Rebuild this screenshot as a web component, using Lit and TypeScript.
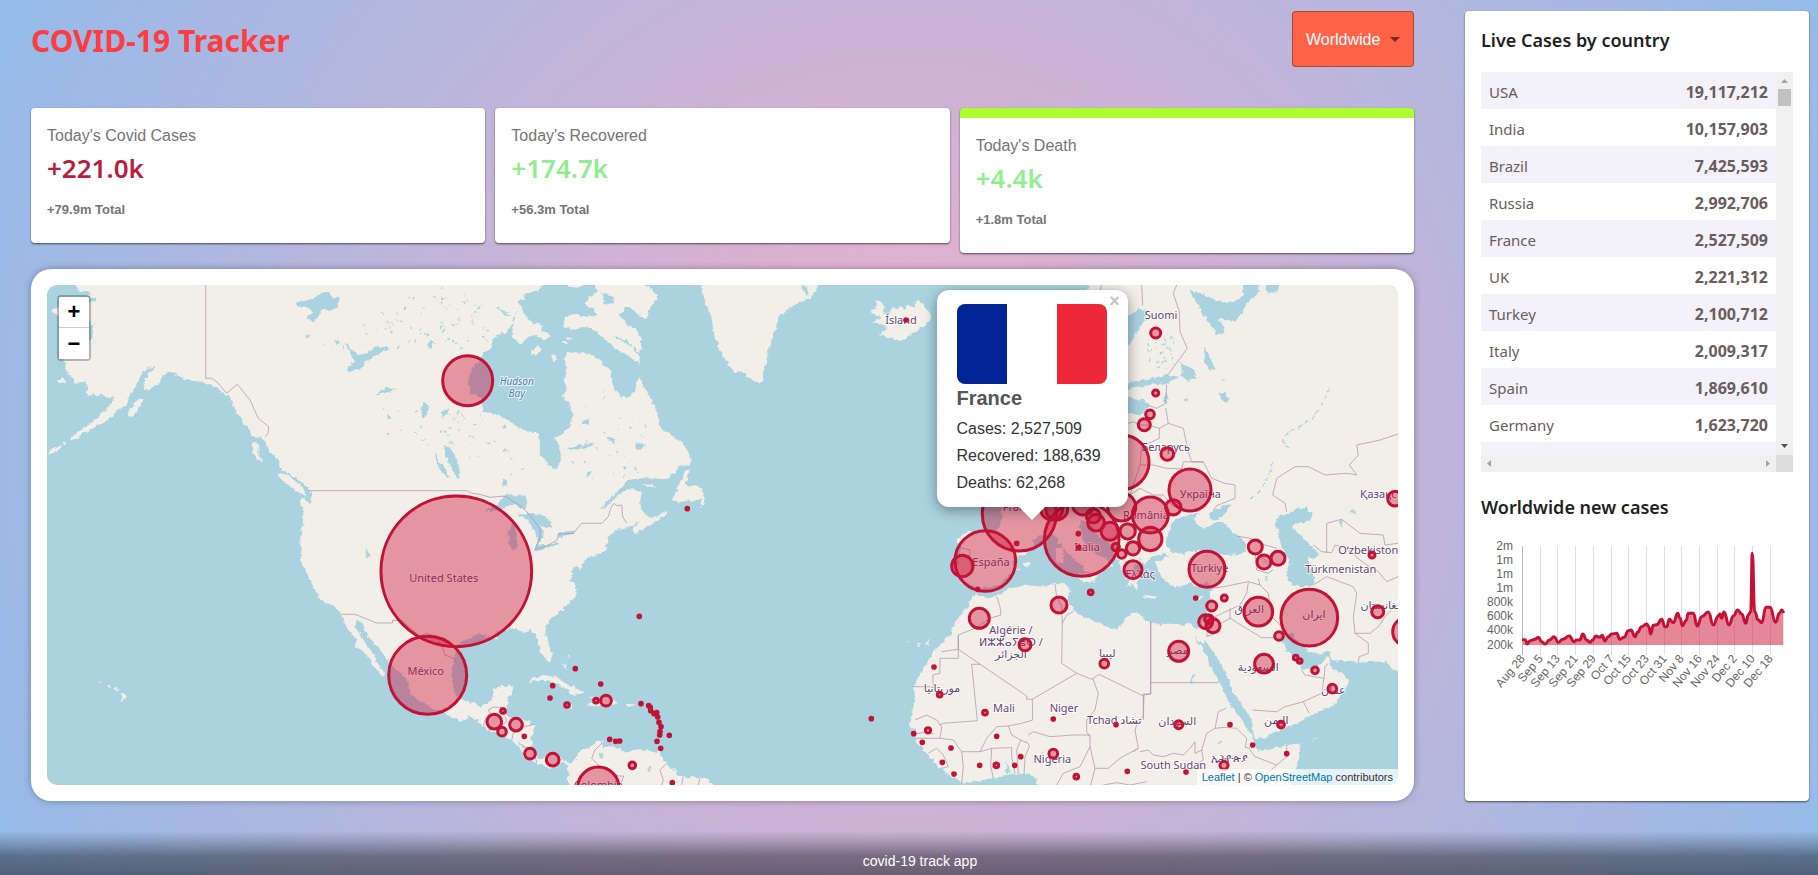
import { LitElement, html, svg, css } from "lit";
import { customElement, property, state } from "lit/decorators.js";
import { classMap } from "lit/directives/class-map.js";

/* ---------- Map geometry ----------
   Shapes are digitised on sheets: each sheet has an origin on the map canvas
   and its points are counted in thirds of a canvas unit. */
const SHEETS: Record<string, [number, number]> = {
  A: [30, 265],
  B: [440, 265],
  C: [900, 265],
  D: [30, 530],
  E: [440, 530],
  F: [900, 490],
  G: [1140, 490],
};

const at = (sheet: string, x: number, y: number): [number, number] => {
  const [ox, oy] = SHEETS[sheet];
  return [Math.round((ox + x / 3) * 10) / 10, Math.round((oy + y / 3) * 10) / 10];
};

const trace = (source: string, close: boolean): string => {
  let sheet = "A";
  const points: string[] = [];
  for (const token of source.trim().split(/\s+/)) {
    if (SHEETS[token]) {
      sheet = token;
      continue;
    }
    const [x, y] = token.split(",").map(Number);
    points.push(at(sheet, x, y).join(" "));
  }
  return `M${points.join("L")}${close ? "Z" : ""}`;
};

const LAND: string[] = [
  // The Americas
  `A 138,20 138,60 140,75 165,80 185,85 175,95 205,103 190,108 178,115 165,150 180,170 187,180 188,218 176,226 160,240
   150,260 100,285 108,300 115,330 130,340 135,356 158,354 165,340 168,360 172,375 170,395 190,385 200,395 215,388
   235,398 252,392 248,410 225,438 195,465 170,485 145,500 120,522 135,525 160,505 185,492 210,480 235,465 262,435
   290,420 300,390 320,360 335,325 355,308 378,305 355,325 345,345 342,375 360,372 390,350 400,328 420,318 440,330
   470,345 510,350 540,360 560,368 580,385 600,400 610,420 618,440 632,455 640,475 655,490 665,510 680,520 695,512
   700,525 712,545 720,560 735,575 745,590 752,612 775,625 800,640 820,655 835,668 845,690 843,715 830,705 812,698
   815,720 820,745 818,780 812,810 810,840
   D 808,30 815,55 812,90 825,120 840,150 850,175 868,200 880,215 900,222 925,238 935,255 945,285 955,300 968,315
   980,330 975,345 1000,365 1020,385 1025,405 1045,420 1058,440 1065,430 1050,410 1040,395 1025,365 1005,340 995,320
   985,305 975,290 975,272 990,273 1003,290 1010,315 1030,335 1045,355 1060,370 1070,390 1090,410 1110,430 1130,450
   1138,480 1150,500 1180,518 1205,535 1240,545 1270,565 1290,572 1320,560 1350,580
   E 130,590 150,603 175,612 200,622 220,635 235,650 245,665 255,680 275,690 290,700 315,708 330,718 345,710 370,695
   380,705 385,720 383,740 385,765 385,790 830,790 815,760 800,748 775,742 740,742 715,735 700,718 680,700 668,688
   660,670 630,664 600,658 575,662 550,665 535,655 515,648 490,655 485,640 490,630 470,636 450,652 425,660 412,680
   400,695 385,698 370,690 345,675 320,675 300,690 285,675 275,650 275,620 285,585 260,572 230,568 205,560 195,545
   205,520 200,505 215,490 222,470 205,465 180,470 162,478 155,510 145,520 120,530 100,518 80,515 50,500 40,475
   35,440 40,400 45,375 50,350 65,335 90,322 110,312 130,315 150,322 175,325 165,308 185,303 215,296 235,300 255,308
   270,300 288,315 295,340 300,360 315,385 328,397 335,385 335,365 325,340 315,315 318,290 335,265 360,245 380,225
   400,210 410,190 405,165 390,150 400,135 392,120 410,110 425,118 430,100 440,85 480,70 500,60 495,45 505,35 503,20
   525,5
   B 550,790 575,780 600,765 585,785 575,800 585,810 605,795 640,775 675,750 680,735 655,755 625,755 605,735 600,710
   605,690 605,680 570,672 545,680 520,705 495,730 480,735 500,710 525,685 550,665 555,650 580,642 620,640 680,643
   700,625 720,605 750,600 752,580 740,550 720,525 690,510 665,490 655,465 650,430 635,410 625,385 610,360 600,335
   590,350 585,380 560,400 545,395 525,375 515,345 515,320 490,300 480,285 450,268 410,262 380,262 370,280 380,310
   375,345 380,375 365,395 385,415 398,445 392,480 370,505 345,520 360,545 362,580 355,600 345,615 330,600 300,570
   298,505 265,500 240,490 200,465 170,448 130,440 125,400 110,390 90,388 85,350 95,310 120,285 130,265 155,245
   155,225 180,205 195,205 215,180 220,155 240,125 235,110 255,100 250,90 280,80 300,70 315,55 315,20`,
  // Baffin Island
  `B 385,20 385,58 395,70 415,70 440,55 465,60 470,80 445,100 435,120 460,130 470,150 440,155 400,148 375,155 370,185
   400,195 430,185 455,190 490,220 520,245 550,265 575,280 600,300 595,270 575,245 520,215 560,225 600,265 605,235
   590,190 560,180 540,150 560,125 590,140 615,165 625,140 655,95 640,80 600,50 600,20`,
  `B 240,125 225,150 218,185 215,220 245,237 265,215 290,210 315,225 332,212 305,195 310,180 280,175 255,150 245,130`,
  `B 275,255 295,243 305,255 285,272 273,268`,
  `B 340,265 350,275 343,293 335,280`,
  `B 363,228 378,228 380,237 368,236`,
  `B 380,218 393,218 396,226 386,226`,
  // Newfoundland, Anticosti
  `B 750,612 735,620 720,650 710,680 695,705 720,712 750,705 765,710 785,700 780,730 798,708 803,735 792,695 780,665
   765,660 745,665 735,655 745,630`,
  `B 605,655 630,656 650,670 630,668`,
  // Greenland, Iceland
  `B 785,20 785,58 790,90 800,120 815,160 820,200 835,240 850,275 870,305 885,325 905,318 930,340 955,355 968,350
   970,320 980,285 985,250 1000,215 1010,180 1020,150 1050,130 1075,115 1110,100 1130,75 1135,55 1135,20`,
  `B 1310,105 1325,110 1338,130 1325,140 1345,150 1360,122 1370,135 1380,122 1395,135 1405,118 1420,125 1430,105
   1450,115 1455,130 1470,140 1472,160 1455,180 1430,200 1400,215 1380,227 1350,218 1320,210 1325,200 1345,190
   1320,175 1295,172 1325,160 1290,140 1310,130`,
  // Caribbean
  `E 262,460 275,445 310,435 345,440 370,455 400,470 435,490 395,495 385,480 350,462 320,450 290,450`,
  `E 450,500 465,500 515,505 535,520 510,525 460,527 435,522 465,518`,
  `E 558,522 582,523 580,530 558,530`,
  `E 375,522 400,528 398,534 375,530`,
  `E 368,400 376,405 380,425 372,415`,
  `E 382,372 388,374 388,386 384,380`,
  `E 650,660 662,660 660,668 650,668`,
  // Pacific coast islands
  `A 300,435 315,410 330,400 340,405 325,435 305,455 293,445`,
  `A 51,568 70,550 97,540 85,555 60,568`,
  `A 98,535 112,532 104,540`,
  `A 663,535 687,535 685,565 697,595 680,580 668,560`,
  `A 743,627 775,632 805,655 825,680 830,693 805,685 775,660 750,640`,
  `A 65,135 80,125 92,130 95,150 75,148`,
  `A 78,345 95,338 108,348 90,356`,
  // Hawaii
  `D 273,490 282,490 292,502 285,510 274,514`,
  `D 206,454 215,454 215,460 206,460`,
  `D 234,465 241,465 241,471 234,471`,
  `D 250,472 258,475 272,482 262,483`,
  // Eurasia and Africa
  `C 560,20 568,60 500,200 300,600
   F 300,40 305,80 300,110 285,128 250,125 200,125 190,132 170,145 170,155 185,165 180,190 175,220 165,250 190,270
   185,280 215,285 225,295 240,300 255,290 300,285 320,260 345,235 335,215 355,200 385,185 400,170 395,150 420,135
   440,140 460,135 475,145 490,175 510,195 530,215 555,240 575,250 570,270 582,280 592,255 600,240 615,240 640,228
   620,205 590,195 570,180 555,160 545,135 535,105 545,90 565,95 580,115 600,140 625,155 640,175 645,195 655,215
   665,235 680,250 690,270 680,290 700,285 715,300 712,280 720,265 705,245 700,230 715,225 735,220 745,210 765,200
   G 70,190 85,198 65,208 45,215 55,240 65,262 90,285 120,290 150,280 170,290 205,275 215,290 210,330 200,360
   195,385 175,410 165,420 150,398 120,407 90,400 60,405 30,395 10,387
   F 735,387 715,370 695,368 680,378 670,400 650,418 620,410 590,395 560,385 525,365 520,350 500,335 505,320 515,305
   500,290 490,278 460,280 430,290 380,285 330,295 290,318 260,322 240,320 228,310 215,320 205,350 180,375 165,400
   155,430 135,450 105,480 90,505 75,530 55,560 40,590 45,620 40,650 35,680 30,705 45,720 50,760 80,790 110,825
   150,855 190,880 250,870 300,860 340,850 400,855 415,885 415,910
   G 450,910 455,870 470,830 480,790 478,760 440,765 380,780 355,782 345,765 340,745 320,715 300,685 275,650 250,600
   225,555 205,515 185,470 165,440 158,428 175,450 190,465 198,448 205,465 235,510 260,555 280,610 310,650 335,690
   335,720 345,745 370,745 410,725 450,710 490,690 530,670 560,655 590,640 605,610 627,573 610,550 580,540 568,520
   565,497 545,520 515,535 488,540 480,520 470,495 465,505 440,480 425,455 432,440 455,425 465,445 490,470 520,490
   550,492 567,483 575,510 600,512 655,518 700,515 735,515 750,530 800,560 800,-300
   C 1560,20`,
  // Mediterranean islands
  `F 478,125 488,130 486,165 472,160`,
  `F 468,175 490,172 490,215 468,218`,
  `F 520,250 565,252 575,280 545,272`,
  `F 365,226 380,216 394,222 385,232`,
  `F 350,238 358,236 356,242`,
  `F 728,316 745,316 772,320 765,326 735,322`,
  `G 160,326 172,320 192,317 178,330`,
  `G 516,745 530,745 528,750 516,750`,
  // Canary and Cape Verde islands
  `F 18,452 26,456 20,460`,
  `F 50,462 58,458 60,468 52,468`,
  `F 78,458 90,446 90,452 82,466`,
];

const WATER: string[] = [
  // Great Bear, Great Slave, Athabasca, Reindeer, Winnipeg
  `A 800,115 850,100 880,80 895,85 905,98 927,95 920,130 900,135 880,132 870,150 850,172 828,155 852,140 830,125 805,124`,
  `A 948,238 985,270 1010,265 1040,245 1080,248 1060,258 1030,275 1005,295 990,315 950,320 960,300 975,290`,
  `A 1035,392 1065,365 1100,374 1060,385`,
  `A 1180,415 1198,420 1190,450 1178,462 1172,450`,
  `A 1245,540 1268,552 1280,590 1290,625 1282,642 1265,600 1245,575`,
  `A 1213,552 1225,590 1250,615 1260,642 1240,625 1220,595`,
  `A 1198,228 1215,225 1205,250 1192,242`,
  `A 1240,445 1258,430 1250,450 1236,460`,
  `A 912,225 930,232 920,240`,
  // Great Lakes
  `B 138,738 175,715 200,685 215,692 255,690 262,710 255,735 235,722 205,720 180,735 155,738`,
  `B 205,800 215,775 228,775 232,840 222,857 208,845`,
  `B 235,750 265,745 300,750 322,755 338,785 318,788 300,780 312,800 296,845 285,800 265,765`,
  `E 283,60 290,45 320,45 350,35 358,42 320,55 290,64`,
  `E 353,12 380,4 403,0 402,12 370,17 355,20`,
  `B 186,645 200,645 202,662 188,664`,
  `B 165,125 190,135 215,152 195,152`,
  `B 485,80 500,90 522,95 520,115 490,118 492,100`,
  `B 585,540 610,530 615,540 600,555 588,552`,
  `B 500,515 525,522 525,538 512,530`,
  `B 380,550 420,540 470,535 440,546 400,556`,
  `B 430,470 448,462 444,476 428,480`,
  `B 440,625 460,612 448,636 440,640`,
  `B 12,540 35,550 40,590 58,600 55,640 40,620 25,590`,
  `B 5,440 25,430 20,445 8,455`,
  `B 1085,62 1100,62 1103,95 1090,80`,
  `D 1003,58 1012,62 1022,78 1012,82`,
  `E 476,668 488,668 490,682 480,686`,
  `E 232,632 250,645 256,655 240,645`,
  `E 625,712 635,710 633,724 626,724`,
  // Baltic and northern Russia
  `C 680,160 690,150 715,132 745,135 735,165 710,200 690,240 670,240`,
  `C 675,372 690,350 730,345 800,330 838,335 800,355 740,360 700,370`,
  `C 670,395 700,402 735,405 745,420 735,440 720,455 700,445 670,440`,
  `C 838,290 862,305 885,315 885,340 865,348 845,340 845,310`,
  `C 912,245 925,265 935,290 947,310 930,318 915,290`,
  `C 868,75 900,85 950,105 1000,115 1032,90 1025,30 1085,30 1075,85 1040,115 1025,145 1005,170 975,165 950,160
   975,180 972,205 950,208 925,170 905,145 890,110`,
  `C 1090,30 1145,30 1132,85 1100,85`,
  `C 955,385 972,385 988,405 975,414 962,402`,
  `C 960,340 972,342 968,350`,
  `C 852,402 864,402 862,412 853,411`,
  `C 798,382 803,400 800,415 790,405`,
  // Black Sea, Azov, Caspian, Aral
  `G 78,165 85,130 95,100 115,85 140,75 170,70 180,72 163,85 175,105 195,117 225,97 245,92 270,120 300,140 318,165
   315,185 295,193 260,195 215,190 175,180 130,192 95,185`,
  `G 205,73 235,55 275,43 260,62 250,78 232,90 210,86`,
  `G 405,100 420,75 450,70 470,55 500,55 515,70 510,90 490,100 465,100 460,115 480,135 500,155 520,172 537,190
   520,208 503,195 510,230 525,265 522,285 490,292 460,285 440,265 440,240 450,215 430,185 420,155 415,125`,
  `G 600,88 608,86 606,110 600,106`,
  `G 628,68 640,58 652,66 640,72`,
  `G 375,262 382,256 382,275 376,275`,
  `G 372,212 380,214 378,222`,
  // African lakes
  `F 315,815 325,825 330,845 318,850 320,835`,
  `G 150,575 165,548 168,552 155,580`,
  `G 236,752 246,752 244,760 237,760`,
];

const BORDERS: string[] = [
  `A 527,60 527,340 545,340 560,350 590,385 622,358 640,380 660,405 685,460 716,485 714,505 706,515`,
  `A 835,677 1310,677 1325,685 1350,688 B 150,697 195,693 245,725 265,745 300,790 300,820 290,840 E 286,58 320,48 352,30 355,12 400,10 B 425,775 485,775 505,755 512,730 522,715 530,722 545,720 548,755 560,775`,
  `D 937,253 975,253 1040,279 1087,279 1088,271 1115,272 1150,300 1165,320 1190,310 1215,318 1235,345 1245,375 1275,387`,
  `E 130,590 135,570 150,548 145,540 160,532 195,532`,
  `E 195,560 200,575 180,590 175,608`,
  `E 285,583 250,590 220,610 215,630`,
  `E 245,650 280,655 290,698`,
  `E 485,640 465,660 455,685 475,705 535,738 552,738 540,765`,
  `E 680,700 660,720 670,750 665,765`,
  `E 730,740 725,765`,
  `E 780,745 775,765`,
  `C 725,60 728,122`,
  `C 590,110 605,60`,
  `C 830,60 820,85 838,140 840,200 862,250 805,328`,
  `C 800,360 797,415 770,430 742,420`,
  `C 797,430 805,475 778,490 778,520 725,545`,
  `C 685,475 700,470 720,480 745,480 778,490`,
  `C 805,475 850,490 865,560 875,590 910,590 935,640 975,655 1005,660 1005,700 950,722 940,738`,
  `C 720,600 760,600 800,610 845,612 850,590 910,592`,
  `C 725,545 720,600 690,690`,
  `C 690,690 720,670 760,690 790,690 820,725`,
  `C 1495,507 1440,525 1370,540 1375,570 1348,600 1370,630 1340,625 1275,630 1225,605 1185,605 1130,640 1118,690 1155,715 1160,740`,
  `G 560,188 560,100 605,88 660,130 730,135 735,165 774,160`,
  `G 520,165 545,185 575,188 585,165 620,175 660,210 680,225 710,240 740,275 774,260`,
  `G 520,285 560,260 600,275 640,290 650,310 640,380 645,430 690,430 715,410 735,380 774,340`,
  `G 645,430 685,460 685,490 658,500 655,518`,
  `G 290,138 330,145 375,165 410,175`,
  `G 325,185 345,190 400,225`,
  `G 345,190 350,240 385,250 400,238`,
  `G 215,295 250,290 325,275 360,285 355,265`,
  `G 360,285 385,310 390,345 395,380 425,410 430,440`,
  `G 325,278 320,310 300,345 215,385`,
  `G 205,395 200,440 240,425 235,405 270,385 365,443 400,443`,
  `G 270,385 270,355`,
  `G 338,660 410,665 435,650 490,635 545,610 552,565 495,555 485,540`,
  `G 552,565 555,530 565,520`,
  `G 490,635 508,670`,
  `F 170,170 210,180 210,195 195,205`,
  `F 290,320 300,350 303,375 270,385 225,415 175,435 175,478 380,618 380,628 397,628 530,550 485,520 487,400 500,375 520,365`,
  `F 465,282 470,320 485,350 487,400`,
  `F 175,435 175,478 125,485`,
  `F 175,478 175,505 120,505 120,550 98,555 100,590 37,590`,
  `F 240,523 215,523 232,692 130,700 118,705`,
  `F 397,628 398,690 365,700 325,708 290,710 260,745 240,785`,
  `F 530,550 575,568 597,553 730,618 730,612 752,612 752,395`,
  `F 578,565 595,610 585,660 560,690 560,725 570,740`,
  `F 730,618 730,680 715,690 705,720 715,775 700,785`,
  `F 385,735 400,725 450,740 520,735 570,735 570,770 540,830 490,850 470,885`,
  `F 362,750 385,760 388,770 375,800 372,855`,
  `F 325,708 335,735 362,750 350,780 355,850`,
  `F 240,785 275,775 335,773 335,800 345,850`,
  `F 275,775 272,830 280,862`,
  `F 45,690 80,675 110,690 125,710 120,745 50,745`,
  `F 45,732 80,726 100,732`,
  `F 120,745 160,750 185,785 190,830 185,880`,
  `F 85,790 110,775 130,795 145,830 125,835`,
  `F 185,785 240,785`,
  `F 570,770 585,835 625,835 660,805 715,775`,
  `F 585,835 572,885`,
  `F 610,885 650,878 690,885 740,875`,
  `G 32,395 32,578 235,578`,
  `G 32,578 32,612 12,615 10,690`,
  `G 258,655 235,665 225,715 200,730 185,780 165,790 165,755 150,775 130,795 100,790 70,800 40,795 25,780 0,785`,
  `G 225,715 255,712 290,715 320,745 316,772 330,775`,
  `G 330,780 345,800 410,825 440,800 440,770`,
  `G 410,825 370,860`,
  `G 185,780 190,810 175,820 200,850 215,885`,
];

type Spot = [sheet: string, x: number, y: number, radius: number];
const CASES: Spot[] = [
  ["B", 83, 347, 79], ["E", 49, 124, 230], ["E", -37, 436, 121], ["B", 1398, 165, 8], ["B", 742, 731, 8],
  ["E", 598, 259, 8], ["E", 406, 416, 8], ["E", 338, 467, 8], ["E", 482, 462, 8], ["E", 330, 504, 8],
  ["E", 381, 525, 11], ["E", 468, 512, 11], ["E", 498, 512, 20], ["E", 603, 521, 8], ["E", 626, 527, 8],
  ["E", 632, 542, 8], ["E", 631, 532, 8], ["E", 642, 551, 8], ["E", 650, 548, 8], ["E", 653, 561, 8],
  ["E", 657, 577, 8], ["E", 663, 590, 8], ["E", 660, 605, 8], ["E", 659, 615, 8], ["E", 688, 616, 8],
  ["E", 651, 634, 8], ["E", 662, 655, 8], ["E", 189, 543, 11], ["E", 163, 575, 26], ["E", 186, 605, 17],
  ["E", 228, 584, 23], ["E", 253, 619, 8], ["E", 270, 671, 20], ["E", 338, 689, 23], ["E", 509, 628, 8],
  ["E", 527, 634, 8], ["E", 539, 633, 8], ["E", 577, 706, 14], ["E", 697, 758, 8], ["E", 475, 773, 66],
  ["E", 1294, 566, 8],
  ["F", 102, 531, 8], ["F", 119, 614, 11], ["F", 255, 668, 11], ["F", 84, 721, 12], ["F", 41, 731, 8],
  ["F", 67, 757, 8], ["F", 153, 774, 8], ["F", 127, 817, 8], ["F", 162, 852, 8], ["F", 239, 826, 8],
  ["F", 289, 826, 11], ["F", 344, 826, 8], ["F", 362, 800, 8], ["F", 290, 739, 8], ["F", 460, 687, 8],
  ["F", 460, 791, 17], ["F", 529, 860, 11], ["F", 682, 844, 8], ["F", 648, 704, 8], ["F", 613, 521, 17],
  ["F", 375, 464, 22], ["F", 238, 385, 34], ["F", 477, 345, 28], ["F", 572, 307, 11], ["F", 256, 213, 95],
  ["F", 187, 228, 36], ["F", 350, 160, 8], ["F", 233, 298, 8], ["F", 358, 72, 115], ["F", 545, 147, 116],
  ["F", 455, 57, 37], ["F", 470, 57, 37], ["F", 550, 42, 37], ["F", 665, 51, 46], ["F", 580, 78, 25],
  ["F", 588, 98, 29], ["F", 630, 124, 31], ["F", 683, 124, 27], ["F", 647, 171, 15], ["F", 665, 192, 17],
  ["F", 699, 175, 24], ["F", 699, 239, 31], ["F", 535, 131, 8], ["F", 536, 173, 8], ["F", 751, 147, 39],
  ["F", 751, 75, 58],
  ["C", 665, 592, 86], ["C", 767, 204, 19], ["C", 767, 384, 13], ["C", 750, 448, 17], ["C", 733, 479, 22],
  ["C", 802, 567, 23], ["C", 870, 675, 67], ["C", 820, 727, 27], ["C", 1485, 701, 26],
  ["G", 346, 171, 25], ["G", 201, 238, 58], ["G", 372, 216, 25], ["G", 414, 205, 25], ["G", 167, 324, 8],
  ["G", 253, 324, 13], ["G", 215, 348, 19], ["G", 197, 395, 25], ["G", 207, 388, 17], ["G", 219, 407, 25],
  ["G", 355, 365, 47], ["G", 417, 438, 17], ["G", 508, 383, 89], ["G", 116, 484, 34], ["G", 372, 521, 32],
  ["G", 467, 503, 11], ["G", 479, 513, 11], ["G", 525, 541, 14], ["G", 577, 596, 17], ["G", 116, 704, 16],
  ["G", 270, 704, 8], ["G", 423, 704, 14], ["G", 338, 765, 8], ["G", 440, 791, 8], ["G", 252, 826, 16],
  ["G", 138, 846, 8], ["G", 713, 365, 22], ["G", 696, 195, 13], ["G", 800, 425, 46],
];

type Label = [sheet: string, x: number, y: number, text: string, kind?: string];
const LABELS: Label[] = [
  ["D", 1241, 156, "United States"], ["D", 1187, 435, "México"],
  ["B", 230, 361, "Hudson", "sea"], ["B", 230, 397, "Bay", "sea"],
  ["B", 1383, 178, "Ísland"], ["C", 783, 163, "Suomi"], ["C", 797, 557, "Беларусь"], ["C", 901, 700, "Україна"],
  ["C", 1462, 700, "Қазақстан"], ["C", 738, 763, "România"], ["F", 561, 183, "Italia"], ["F", 273, 227, "España"],
  ["F", 360, 62, "France"], ["F", 720, 265, "Ελλάς"], ["F", 333, 431, "Algérie /"], ["F", 333, 467, "ⵍⵣⵣⴰⵢⴻⵔ /"],
  ["F", 333, 503, "الجزائر"], ["F", 622, 500, "ليبيا"], ["F", 126, 605, "موريتانيا"], ["F", 312, 667, "Mali"],
  ["F", 492, 667, "Niger"], ["F", 643, 703, "Tchad تشاد"], ["F", 457, 820, "Nigeria"], ["G", 100, 838, "South Sudan"],
  ["G", 209, 247, "Türkiye"], ["G", 685, 192, "Oʻzbekiston"], ["G", 602, 248, "Türkmenistan"],
  ["G", 328, 370, "العراق"], ["G", 522, 385, "ایران"], ["G", 728, 356, "افغانستان"], ["G", 113, 493, "مصر"],
  ["G", 355, 542, "السعودية"], ["G", 580, 612, "عمان"], ["G", 409, 703, "اليمن"], ["G", 112, 706, "السودان"],
  ["G", 268, 815, "ኢትዮጵያ"], ["E", 475, 777, "Colombia"],
];

/* Lake districts: small lakes are strewn over each box from a fixed seed. */
const LAKE_DISTRICTS: [string, number, number, number, number, number][] = [
  ["A", 1000, 70, 1340, 250, 46],
  ["A", 1060, 430, 1340, 540, 30],
  ["B", 0, 70, 150, 250, 30],
  ["B", 390, 340, 620, 640, 34],
  ["B", 20, 450, 280, 640, 18],
  ["C", 740, 215, 825, 310, 34],
  ["A", 820, 180, 960, 260, 6],
  ["F", 700, 205, 780, 300, 16],
];

const strewLakes = () => {
  let seed = 7;
  const next = () => (seed = (seed * 16807) % 2147483647) / 2147483647;
  return LAKE_DISTRICTS.flatMap(([sheet, x1, y1, x2, y2, count]) =>
    Array.from({ length: count }, () => {
      const [cx, cy] = at(sheet, x1 + next() * (x2 - x1), y1 + next() * (y2 - y1));
      const rx = 0.5 + next() * 1.6;
      return { cx, cy, rx, ry: 0.4 + next() * 0.6, turn: Math.round(next() * 180) };
    }),
  );
};
const LAKES = strewLakes();

@customElement("case-map")
class CaseMap extends LitElement {
  @state() private popupOpen = true;

  static styles = css`
    :host {
      display: block;
    }
    .card {
      padding: 16px;
      background: #fff;
      border-radius: 20px;
      box-shadow: 0 0 8px -2px rgba(0, 0, 0, 0.5);
    }
    .map {
      position: relative;
      height: 500px;
      overflow: hidden;
      border-radius: 10px;
      background: #aad3df;
      font-family: "Liberation Sans", Arial, sans-serif;
    }
    .canvas {
      display: block;
      width: 100%;
      height: 100%;
    }
    .land {
      fill: #f2efe9;
    }
    .water {
      fill: #aad3df;
    }
    .river {
      fill: none;
      stroke: #aad3df;
      stroke-width: 1.2;
      stroke-dasharray: 5 3;
    }
    .border {
      fill: none;
      stroke: #a98fac;
      stroke-width: 0.7;
      stroke-linejoin: round;
    }
    .label {
      font: 11px "Noto Sans", "DejaVu Sans", sans-serif;
      fill: #634674;
      stroke: rgba(255, 255, 255, 0.7);
      stroke-width: 2px;
      paint-order: stroke;
      text-anchor: middle;
    }
    .sea {
      font-size: 10px;
      font-style: italic;
      fill: #4d80b3;
    }
    .spot {
      fill: #cc1034;
      fill-opacity: 0.4;
      stroke: #c21236;
      stroke-width: 3;
    }
    .zoom {
      position: absolute;
      top: 10px;
      left: 10px;
      display: flex;
      flex-direction: column;
      border: 2px solid rgba(0, 0, 0, 0.25);
      border-radius: 4px;
      background-clip: padding-box;
    }
    .zoom-button {
      width: 30px;
      height: 31px;
      padding: 0;
      border: 0;
      background: #fff;
      color: #000;
      font: bold 22px/30px "Liberation Sans", Arial, sans-serif;
      cursor: pointer;
    }
    .zoom-button:first-child {
      border-bottom: 1px solid #ccc;
      border-radius: 2px 2px 0 0;
    }
    .popup {
      position: absolute;
      top: 5px;
      left: calc(50% + 214px);
      width: 151px;
      padding: 14px 20px 11px;
      border-radius: 12px;
      background: #fff;
      box-shadow: 0 3px 14px rgba(0, 0, 0, 0.4);
      color: #333;
    }
    .popup::after {
      content: "";
      position: absolute;
      top: 100%;
      left: 50%;
      margin-left: -13px;
      border: 13px solid transparent;
      border-bottom: 0;
      border-top-color: #fff;
    }
    .close {
      position: absolute;
      top: 2px;
      right: 4px;
      width: 18px;
      height: 18px;
      padding: 0;
      border: 0;
      background: none;
      color: #c3c3c3;
      font: bold 18px/18px "Liberation Sans", Arial, sans-serif;
      cursor: pointer;
    }
    .flag {
      display: block;
      width: 150px;
      height: 80px;
      border-radius: 8px;
    }
    .country {
      margin: 0 0 3px;
      color: #555;
      font-size: 20px;
      font-weight: bold;
      line-height: 28px;
    }
    .fact {
      margin: 0;
      font-size: 16px;
      line-height: 27px;
    }
    .attribution {
      position: absolute;
      right: 0;
      bottom: 0;
      padding: 0 5px;
      background: rgba(255, 255, 255, 0.7);
      color: #333;
      font-size: 11px;
      line-height: 16px;
    }
    .attribution-link {
      color: #0078a8;
      text-decoration: none;
    }
  `;

  render() {
    return html`
      <section class="card">
        <div class="map">
          <svg class="canvas" viewBox="47 285 1351 500" preserveAspectRatio="xMidYMid slice" role="img" aria-label="Cases by country">
            <filter id="coast" x="0" y="0" width="100%" height="100%" color-interpolation-filters="sRGB">
              <feTurbulence type="fractalNoise" baseFrequency="0.22" numOctaves="3" seed="4" />
              <feDisplacementMap in="SourceGraphic" scale="5" xChannelSelector="R" yChannelSelector="G" />
            </filter>
            <g filter="url(#coast)">
              ${LAND.map((s) => svg`<path class="land" d=${trace(s, true)} />`)}
              ${WATER.map((s) => svg`<path class="water" d=${trace(s, true)} />`)}
              ${LAKES.map(
                (l) => svg`<ellipse class="water" cx=${l.cx} cy=${l.cy} rx=${l.rx} ry=${l.ry}
                  transform=${`rotate(${l.turn} ${l.cx} ${l.cy})`} />`,
              )}
              <path class="river" d=${trace("C 1288,368 1275,400 1260,430 1232,465 1190,490 1158,505 1150,530 1165,550", false)} />
              <path class="river" d=${trace("C 1120,590 1105,640 1080,675 1050,705", false)} />
            </g>
            ${BORDERS.map((s) => svg`<path class="border" d=${trace(s, false)} />`)}
            ${LABELS.map(([sheet, x, y, text, kind]) => {
              const [px, py] = at(sheet, x, y);
              return svg`<text class=${`label ${kind ?? ""}`} x=${px} y=${py}>${text}</text>`;
            })}
            ${CASES.map(([sheet, x, y, radius]) => {
              const [cx, cy] = at(sheet, x, y);
              return svg`<circle class="spot" cx=${cx} cy=${cy} r=${(radius - 4) / 3} />`;
            })}
          </svg>
          <div class="zoom">
            <button class="zoom-button" type="button" aria-label="Zoom in">+</button>
            <button class="zoom-button" type="button" aria-label="Zoom out">−</button>
          </div>
          ${this.popupOpen
            ? html`
                <article class="popup">
                  <button class="close" type="button" aria-label="Close" @click=${() => (this.popupOpen = false)}>×</button>
                  <svg class="flag" viewBox="0 0 150 80" role="img" aria-label="Flag of France">
                    <rect width="50" height="80" fill="#002395" />
                    <rect x="50" width="50" height="80" fill="#fff" />
                    <rect x="100" width="50" height="80" fill="#ed2939" />
                  </svg>
                  <h2 class="country">France</h2>
                  <p class="fact">Cases: 2,527,509</p>
                  <p class="fact">Recovered: 188,639</p>
                  <p class="fact">Deaths: 62,268</p>
                </article>
              `
            : null}
          <div class="attribution">
            <a class="attribution-link" href="#leaflet">Leaflet</a> | ©
            <a class="attribution-link" href="#osm">OpenStreetMap</a> contributors
          </div>
        </div>
      </section>
    `;
  }
}

@customElement("info-box")
class InfoBox extends LitElement {
  @property() label = "";
  @property() today = "";
  @property() total = "";
  @property() tone = "good";
  @property({ type: Boolean }) selected = false;

  static styles = css`
    :host {
      display: block;
    }
    .box {
      height: 135px;
      padding: 16px;
      box-sizing: border-box;
      border-radius: 4px;
      background: #fff;
      box-shadow: 0 1px 2px rgba(0, 0, 0, 0.6);
      font-family: "Liberation Sans", Arial, sans-serif;
      color: #757575;
    }
    .selected {
      height: 145px;
      border-top: 10px solid greenyellow;
    }
    .label {
      margin: 0;
      font-size: 16px;
      line-height: 24px;
    }
    .today {
      margin: 0;
      font: 600 26px/40px "Noto Sans", "Open Sans", sans-serif;
      color: lightgreen;
    }
    .bad {
      color: #b81d3e;
    }
    .total {
      margin: 11px 0 0;
      font-size: 13px;
      font-weight: bold;
      line-height: 22px;
    }
  `;

  render() {
    return html`
      <section class=${classMap({ box: true, selected: this.selected })}>
        <p class="label">${this.label}</p>
        <h2 class=${classMap({ today: true, bad: this.tone === "bad" })}>${this.today}</h2>
        <p class="total">${this.total} Total</p>
      </section>
    `;
  }
}

const COUNTRIES: [string, string][] = [
  ["USA", "19,117,212"],
  ["India", "10,157,903"],
  ["Brazil", "7,425,593"],
  ["Russia", "2,992,706"],
  ["France", "2,527,509"],
  ["UK", "2,221,312"],
  ["Turkey", "2,100,712"],
  ["Italy", "2,009,317"],
  ["Spain", "1,869,610"],
  ["Germany", "1,623,720"],
  ["", ""],
];

@customElement("country-table")
class CountryTable extends LitElement {
  static styles = css`
    :host {
      display: block;
    }
    .frame {
      display: grid;
      grid-template-columns: 1fr 17px;
      grid-template-rows: 383px 17px;
    }
    .view {
      overflow: auto;
      scrollbar-width: none;
    }
    .table {
      width: 100%;
      border-collapse: collapse;
      font: 15px/21px "Noto Sans", "Open Sans", sans-serif;
      color: #6a5d5d;
    }
    .row {
      height: 37px;
    }
    .row:nth-child(odd) {
      background: #f3f2f8;
    }
    .name {
      padding: 10px 8px 6px;
      font-weight: normal;
      text-align: left;
    }
    .count {
      padding: 10px 8px 6px;
      font-weight: bold;
      font-size: 16px;
      text-align: right;
    }
    .bar {
      display: flex;
      justify-content: space-between;
      align-items: center;
      background: #f0f0f0;
    }
    .upright {
      flex-direction: column;
    }
    .arrow {
      width: 17px;
      height: 17px;
      fill: #a3a3a3;
    }
    .strong {
      fill: #505050;
    }
    .thumb {
      width: 13px;
      height: 17px;
      margin-bottom: auto;
      background: #c1c1c1;
    }
    .corner {
      background: #dcdcdc;
    }
  `;

  render() {
    return html`
      <div class="frame">
        <div class="view">
          <table class="table">
            <tbody>
              ${COUNTRIES.map(
                ([name, count]) => html`
                  <tr class="row">
                    <th class="name" scope="row">${name}</th>
                    <td class="count">${count}</td>
                  </tr>
                `,
              )}
            </tbody>
          </table>
        </div>
        <div class="bar upright">
          <svg class="arrow" viewBox="0 0 17 17"><path d="M5 11h7L8.500 7z" /></svg>
          <div class="thumb"></div>
          <svg class="arrow strong" viewBox="0 0 17 17"><path d="M5 6h7L8.500 10z" /></svg>
        </div>
        <div class="bar">
          <svg class="arrow" viewBox="0 0 17 17"><path d="M10 5v7L6 8.500z" /></svg>
          <svg class="arrow" viewBox="0 0 17 17"><path d="M7 5v7L11 8.500z" /></svg>
        </div>
        <div class="corner"></div>
      </div>
    `;
  }
}

const Y_TICKS: [string, number][] = [
  ["2m", 11], ["1m", 25], ["1m", 39], ["1m", 53], ["800k", 67], ["600k", 81], ["400k", 95], ["200k", 110],
];
const X_TICKS = [
  "Aug 28", "Sep 5", "Sep 13", "Sep 21", "Sep 29", "Oct 7", "Oct 15", "Oct 23", "Oct 31",
  "Nov 8", "Nov 16", "Nov 24", "Dec 2", "Dec 10", "Dec 18",
];
/* Daily new cases, in thirds of a chart unit from the left edge and top. */
const SERIES =
  `127,302 132,302 139,315 147,305 162,301 172,295 182,308 192,315 205,303 219,293 232,310 245,301 265,291
   279,308 287,303 297,303 305,285 317,303 327,310 335,303 344,291 357,295 364,289 371,306 382,293 392,285 407,283
   417,301 429,295 442,275 450,273 462,293 470,279 482,263 497,255 503,263 509,285 517,259 527,257 542,241 552,263
   557,263 565,241 577,251 590,223 597,238 604,260 615,245 622,223 637,223 649,261 662,233 682,219 697,258 712,231
   717,225 722,238 729,219 744,258 757,231 770,213 782,225 794,253 802,228 809,218 814,43 821,218 832,243 842,251
   855,205 867,205 884,250 895,223 902,213 907,218`
    .trim()
    .split(/\s+/)
    .map((pair) => pair.split(",").map((n) => Number(n) / 3));

/* Joins the points with a curve whose handles are level, so peaks stay at their values. */
const smooth = (points: number[][]): string =>
  points
    .map(([x, y], i) => {
      if (!i) return `M${x.toFixed(1)} ${y.toFixed(1)}`;
      const [px, py] = points[i - 1];
      const mid = ((px + x) / 2).toFixed(1);
      return `C${mid} ${py.toFixed(1)} ${mid} ${y.toFixed(1)} ${x.toFixed(1)} ${y.toFixed(1)}`;
    })
    .join("");

@customElement("cases-chart")
class CasesChart extends LitElement {
  static styles = css`
    :host {
      display: block;
    }
    .chart {
      display: block;
      width: 100%;
    }
    .tick {
      font: 12px "Liberation Sans", Arial, sans-serif;
      fill: #666;
      text-anchor: end;
    }
    .grid {
      stroke: rgba(0, 0, 0, 0.12);
    }
    .axis {
      stroke: rgba(0, 0, 0, 0.28);
    }
    .area {
      fill: rgba(204, 16, 52, 0.5);
    }
    .line {
      fill: none;
      stroke: #c41236;
      stroke-width: 3;
      stroke-linejoin: round;
      stroke-linecap: round;
    }
  `;

  render() {
    const line = smooth(SERIES);
    return html`
      <svg class="chart" viewBox="0 0 312 156" role="img" aria-label="Worldwide new cases per day">
        ${Y_TICKS.map(([text, y]) => svg`<text class="tick" x="32" y=${y}>${text}</text>`)}
        ${X_TICKS.map((text, i) => {
          const x = Math.round(41 + i * 17.7) + 0.5;
          return svg`
            <line class=${i ? "grid" : "axis"} x1=${x} x2=${x} y1="7" y2="116" />
            <text class="tick" transform=${`translate(${x + 3} 120) rotate(-50)`}>${text}</text>`;
        })}
        <path class="area" d=${`${line}V106H42Z`} />
        <path class="line" d=${line} />
      </svg>
    `;
  }
}

@customElement("app-root")
export class AppRoot extends LitElement {
  static styles = css`
    :host {
      display: flex;
      flex-direction: column;
      min-height: 100vh;
      background: radial-gradient(circle, #eeaeca 0%, #94bbe9 100%);
      font-family: "Liberation Sans", Arial, sans-serif;
    }
    .layout {
      display: grid;
      grid-template-columns: minmax(0, 1fr) 344px;
      gap: 51px;
      padding: 11px 9px 30px 31px;
    }
    .header {
      display: flex;
      justify-content: space-between;
      align-items: center;
      margin-bottom: 41px;
    }
    .title {
      margin: 0;
      padding-top: 4px;
      color: #fc3d42;
      font: 700 30px/44px "Noto Sans", "Open Sans", sans-serif;
    }
    .picker {
      position: relative;
      display: flex;
      align-items: center;
    }
    .select {
      width: 122px;
      height: 56px;
      padding: 0 13px;
      appearance: none;
      border: 1px solid rgba(0, 0, 0, 0.3);
      border-radius: 4px;
      background: tomato;
      background-clip: border-box;
      color: #fff;
      font: 16px "Liberation Sans", Arial, sans-serif;
    }
    .caret {
      position: absolute;
      right: 14px;
      width: 10px;
      height: 5px;
      fill: rgba(0, 0, 0, 0.54);
      pointer-events: none;
    }
    .stats {
      display: grid;
      grid-template-columns: repeat(3, 1fr);
      align-items: start;
      gap: 10px;
      margin-bottom: 16px;
    }
    .side {
      padding: 16px;
      border-radius: 4px;
      background: #fff;
      box-shadow: 0 1px 2px rgba(0, 0, 0, 0.6);
    }
    .heading {
      margin: 0 0 18px;
      color: #1f1f1f;
      font: 600 18px/27px "Noto Sans", "Open Sans", sans-serif;
    }
    .second {
      margin-top: 22px;
    }
    .footer {
      display: flex;
      align-items: center;
      justify-content: center;
      height: 44px;
      margin-top: auto;
      padding: 15px 0 0 22px;
      box-sizing: border-box;
      background: linear-gradient(transparent, rgba(0, 0, 0, 0.18) 12px, rgba(0, 0, 0, 0.4) 25px, rgba(0, 0, 0, 0.47));
      color: #fff;
      font-size: 14px;
    }
  `;

  render() {
    return html`
      <div class="layout">
        <main>
          <header class="header">
            <h1 class="title">COVID-19 Tracker</h1>
            <div class="picker">
              <select class="select" aria-label="Country">
                <option>Worldwide</option>
                ${COUNTRIES.filter(([name]) => name).map(([name]) => html`<option>${name}</option>`)}
              </select>
              <svg class="caret" viewBox="0 0 10 5"><path d="M0 0h10L5 5z" /></svg>
            </div>
          </header>
          <div class="stats">
            <info-box label="Today's Covid Cases" today="+221.0k" total="+79.9m" tone="bad"></info-box>
            <info-box label="Today's Recovered" today="+174.7k" total="+56.3m"></info-box>
            <info-box label="Today's Death" today="+4.4k" total="+1.8m" selected></info-box>
          </div>
          <case-map></case-map>
        </main>
        <aside class="side">
          <h2 class="heading">Live Cases by country</h2>
          <country-table></country-table>
          <h2 class="heading second">Worldwide new cases</h2>
          <cases-chart></cases-chart>
        </aside>
      </div>
      <footer class="footer">covid-19 track app</footer>
    `;
  }
}
